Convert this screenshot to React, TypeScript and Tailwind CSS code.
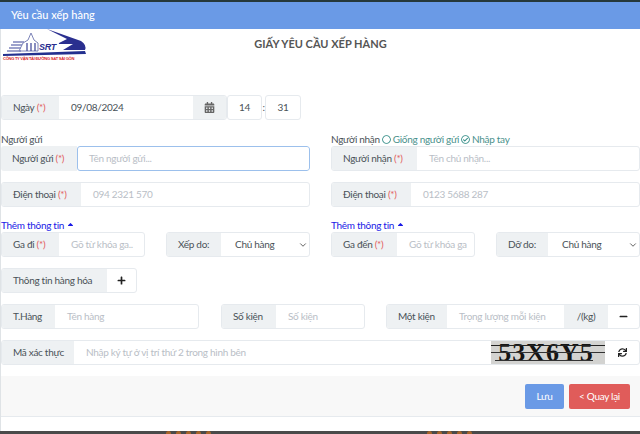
import { FaCalendarAlt, FaMinus, FaPlus, FaRegCheckCircle, FaRegCircle, FaSortUp, FaSync } from "react-icons/fa";
import { ChevronDown } from "lucide-react";
import type { ReactNode } from "react";

const borderBox = "flex h-[25px] border border-[#e6eaee] rounded-[3px] bg-white overflow-hidden";

function Req() {
    return <span className="text-[#e25c5c]"> (*)</span>;
}

function Addon({ children, width }: { children: ReactNode; width: string }) {
    return (
        <div className={`${width} shrink-0 h-full bg-[#eef1f3] text-[#4a5258] flex items-center pl-[11px] whitespace-pre`}>
            {children}
        </div>
    );
}

function Placeholder({ children }: { children: ReactNode }) {
    return <div className="flex-1 min-w-0 pl-3 text-[#b9bec6] flex items-center whitespace-nowrap overflow-hidden">{children}</div>;
}

function Select({ value }: { value: string }) {
    return (
        <div className="flex-1 flex items-center justify-between pl-[14px] pr-[1px] text-[#4a5258]">
            <span>{value}</span>
            <ChevronDown size={10} className="text-[#444]" />
        </div>
    );
}

function MoreInfo() {
    return (
        <div className="h-[14px] flex items-center text-[#1a1ae6] leading-none">
            Thêm thông tin
            <FaSortUp size={9} className="ml-[2px] mt-[3px]" />
        </div>
    );
}

function Logo() {
    return (
        <div className="w-[86px] h-[36px] flex flex-col">
            <svg width="86" height="27" viewBox="0 0 86 27">
                <path d="M46 0 L80 12 Q86 16 84 21 L62 21 L72 15 L56 15 L66 10 Z" fill="#2a2f8f" />
                <path d="M2 25 L84 22 L85 25 L2 27 Z" fill="#23308f" />
                <path d="M38 14 L58 14 L56 22 L36 22 Z" fill="#fff" />
                <path d="M30 4 L33 11 L37 14 L37 22 L18 22 L22 14 L27 11 Z" fill="#fff" stroke="#7d84b8" strokeWidth="1" />
                <path d="M26 14 v8 M30 14 v8 M34 14 v8" stroke="#3b4296" strokeWidth="1.2" />
                <path d="M12 13 h11 M10 16 h11 M8 19 h12 M6 22 h14" stroke="#7d84bc" strokeWidth="1.6" />
            </svg>
            <div className="relative h-0">
                <span className="absolute left-[38px] -top-[13px] text-[9px] leading-none italic font-bold text-[#2a2f8f] font-['Liberation_Sans',sans-serif]">SRT</span>
            </div>
            <div className="text-[4.1px] leading-[6px] font-bold text-[#d9252a] whitespace-nowrap pl-[2px] font-['Liberation_Sans',sans-serif]">
                CÔNG TY VẬN TẢI ĐƯỜNG SẮT SÀI GÒN
            </div>
        </div>
    );
}

function Captcha() {
    return (
        <div className="relative w-[114px] h-[23px] bg-[#d3d3d1] overflow-hidden flex items-center justify-center pr-[4px]">
            <span className="font-['Liberation_Serif',serif] text-[26px] font-bold leading-[23px] text-[#151515] tracking-[1px]">53X6Y5</span>
            <div className="absolute left-0 right-0 top-[4px] h-[1px] bg-[#222]" />
            <div className="absolute left-0 right-0 top-[11px] h-[1px] bg-[#333]" />
            <div className="absolute left-[4px] right-[12px] top-[19px] h-[1px] bg-[#333]" />
        </div>
    );
}

function Stars({ offset }: { offset: string }) {
    return (
        <div className={`flex gap-[5px] ${offset}`}>
            {[0, 1, 2, 3, 4].map((i) => (
                <div key={i} className="w-[5px] h-[3px] rounded-t-full bg-[#a8642a]" />
            ))}
        </div>
    );
}

export default function App() {
    return (
        <div className="w-[640px] h-[434px] overflow-hidden bg-[#4a4a4a] flex flex-col text-[10px] tracking-[-0.3px] text-[#4a5258] font-['Lato',sans-serif]">
            <div className="h-[2px] bg-[#26383a]" />
            <div className="h-[27px] bg-[#6a9ae6] text-white text-[11px] tracking-normal font-medium flex items-center pl-[11px]">Yêu cầu xếp hàng</div>

            <div className="h-[402px] bg-white border-l border-[#dfe3e6]">
                {/* top with logo and title */}
                <div className="relative h-[66px]">
                    <Logo />
                    <div className="absolute left-0 right-0 top-[7px] text-center text-[11px] tracking-normal font-bold text-[#555]">GIẤY YÊU CẦU XẾP HÀNG</div>
                </div>

                {/* date row */}
                <div className="flex items-center">
                    <div className={`${borderBox} w-[226px]`}>
                        <Addon width="w-[57px]">Ngày<Req /></Addon>
                        <div className="w-[134px] pl-3 flex items-center text-[#4a5258]">09/08/2024</div>
                        <div className="flex-1 bg-[#eef1f3] flex items-center justify-center text-[#666]"><FaCalendarAlt size={11} /></div>
                    </div>
                    <div className={`${borderBox} w-[35px] items-center justify-center`}>14</div>
                    <span className="w-[3px] text-center">:</span>
                    <div className={`${borderBox} w-[36px] items-center justify-center`}>31</div>
                </div>

                {/* sender and receiver */}
                <div className="flex gap-[21px] mt-[13px]">
                    <div className="w-[309px]">
                        <div className="h-[12px] leading-[12px]">Người gửi</div>
                        <div className="flex h-[25px] mt-[1px] rounded-[3px] overflow-hidden">
                            <Addon width="w-[76px]">Người gửi<Req /></Addon>
                            <div className="flex-1 flex items-center border border-[#9cc0ec] rounded-[3px] pl-[11px] text-[#b9bec6]">Tên người gửi...</div>
                        </div>
                        <div className={`${borderBox} mt-[11px]`}>
                            <Addon width="w-[79px]">Điện thoại<Req /></Addon>
                            <Placeholder>094 2321 570</Placeholder>
                        </div>
                        <div className="mt-[11px]"><MoreInfo /></div>
                        <div className="flex justify-between">
                            <div className={`${borderBox} w-[144px]`}>
                                <Addon width="w-[57px]">Ga đi<Req /></Addon>
                                <Placeholder>Gõ từ khóa ga..</Placeholder>
                            </div>
                            <div className={`${borderBox} w-[144px]`}>
                                <Addon width="w-[54px]">Xếp do:</Addon>
                                <Select value="Chủ hàng" />
                            </div>
                        </div>
                    </div>
                    <div className="w-[309px]">
                        <div className="h-[12px] leading-[12px] flex items-center whitespace-nowrap">
                            Người nhận
                            <FaRegCircle size={9} className="ml-[2px] text-[#2e8a84]" />
                            <span className="ml-[2px] text-[#4a918c]">Giống người gửi</span>
                            <FaRegCheckCircle size={9} className="ml-[2px] text-[#2e8a84]" />
                            <span className="ml-[2px] text-[#4a918c]">Nhập tay</span>
                        </div>
                        <div className={`${borderBox} mt-[1px]`}>
                            <Addon width="w-[85px]">Người nhận<Req /></Addon>
                            <Placeholder>Tên chủ nhận...</Placeholder>
                        </div>
                        <div className={`${borderBox} mt-[11px]`}>
                            <Addon width="w-[79px]">Điện thoại<Req /></Addon>
                            <Placeholder>0123 5688 287</Placeholder>
                        </div>
                        <div className="mt-[11px]"><MoreInfo /></div>
                        <div className="flex justify-between">
                            <div className={`${borderBox} w-[144px]`}>
                                <Addon width="w-[65px]">Ga đến<Req /></Addon>
                                <Placeholder>Gõ từ khóa ga</Placeholder>
                            </div>
                            <div className={`${borderBox} w-[144px]`}>
                                <Addon width="w-[51px]">Dỡ do:</Addon>
                                <Select value="Chủ hàng" />
                            </div>
                        </div>
                    </div>
                </div>

                {/* goods */}
                <div className={`${borderBox} w-[136px] mt-[11px]`}>
                    <Addon width="w-[105px]">Thông tin hàng hóa</Addon>
                    <div className="flex-1 flex items-center justify-center text-[#222]"><FaPlus size={9} /></div>
                </div>

                <div className="flex mt-[11px]">
                    <div className={`${borderBox} w-[198px]`}>
                        <Addon width="w-[53px]">T.Hàng</Addon>
                        <Placeholder>Tên hàng</Placeholder>
                    </div>
                    <div className={`${borderBox} w-[144px] ml-[22px]`}>
                        <Addon width="w-[54px]">Số kiện</Addon>
                        <Placeholder>Số kiện</Placeholder>
                    </div>
                    <div className={`${borderBox} w-[254px] ml-[21px]`}>
                        <Addon width="w-[60px]">Một kiện</Addon>
                        <Placeholder>Trọng lượng mỗi kiện</Placeholder>
                        <div className="w-[44px] h-full bg-[#eef1f3] flex items-center justify-center">/(kg)</div>
                        <div className="w-[31px] flex items-center justify-center text-[#222]"><FaMinus size={9} /></div>
                    </div>
                </div>

                <div className={`${borderBox} mt-[11px] items-center`}>
                    <Addon width="w-[72px]">Mã xác thực</Addon>
                    <Placeholder>Nhập ký tự ở vị trí thứ 2 trong hình bên</Placeholder>
                    <Captcha />
                    <div className="w-[34px] flex items-center justify-center text-[#222]"><FaSync size={9} /></div>
                </div>

                {/* footer */}
                <div className="h-[41px] mt-[11px] bg-[#f8f8f8] border-b border-[#e6eaee] flex items-center justify-end gap-[5px] pr-[10px]">
                    <div className="w-[39px] h-[25px] bg-[#6a9ae6] text-white rounded-[2px] flex items-center justify-center">Lưu</div>
                    <div className="w-[61px] h-[25px] bg-[#e05c5a] text-white rounded-[2px] flex items-center justify-center">&lt; Quay lại</div>
                </div>
            </div>

            {/* page behind the dialog */}
            <div className="h-[3px] flex items-end">
                <Stars offset="ml-[166px]" />
                <Stars offset="ml-[216px]" />
            </div>
        </div>
    );
}
